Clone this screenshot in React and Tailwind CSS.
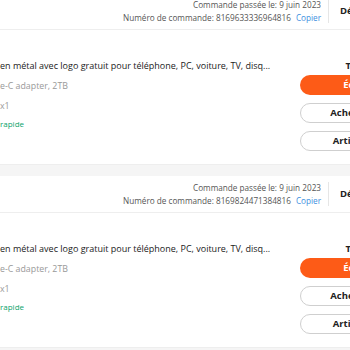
import React from "react";

const orders = [
  { date: "9 juin 2023", number: "8169633336964816" },
  { date: "9 juin 2023", number: "8169824471384816" },
];

const OrderCard = ({ order }) => {
  return (
    <div className="bg-white border-b border-[#eeeeee]">
      {/* header */}
      <div className="flex items-center h-[37px] border-b border-[#eeeeee]">
        <div className="flex-1" />
        <div className="text-right text-[8.2px] leading-[13px] text-[#555]">
          <div>Commande passée le: {order.date}</div>
          <div>
            Numéro de commande: {order.number}
            <span className="ml-[5px] text-[#3d8fe0]">Copier</span>
          </div>
        </div>
        <div className="w-px h-[24px] bg-[#e6e6e6] ml-[7px] mr-[11px]" />
        <div className="w-[120px] pr-[10px] text-[9.5px] font-bold text-[#222] whitespace-nowrap">
          Détails de la commande
        </div>
      </div>

      {/* body */}
      <div className="flex pt-[30px] pb-[13px]">
        <div className="flex-1 min-w-0 pr-[10px]">
          <div className="text-[9px] leading-[12px] text-[#222] whitespace-nowrap">
            en métal avec logo gratuit pour téléphone, PC, voiture, TV, disq...
          </div>
          <div className="mt-[8px] text-[8.8px] leading-[12px] text-[#999]">
            e-C adapter, 2TB
          </div>
          <div className="mt-[8px] text-[8.8px] leading-[12px] text-[#999]">x1</div>
          <div className="mt-[6px] text-[8px] leading-[12px] text-[#0aa36b]">rapide</div>
        </div>
        <div className="w-[150px] flex flex-col items-stretch">
          <div className="text-center text-[9.5px] leading-[12px] font-bold text-[#222]">
            Total: 12,48€
          </div>
          <button className="mt-[3px] h-[20px] rounded-full bg-[#fd5b17] text-white text-[9.5px] font-bold">
            Écrire un avis
          </button>
          <button className="mt-[8px] h-[20px] rounded-full border border-[#cfcfcf] bg-white text-[#222] text-[9.5px] font-bold">
            Acheter à nouveau
          </button>
          <button className="mt-[8px] h-[20px] rounded-full border border-[#cfcfcf] bg-white text-[#222] text-[9.5px] font-bold">
            Articles similaires
          </button>
        </div>
        <div className="w-[10px]" />
      </div>
    </div>
  );
};

export default function App() {
  return (
    <div
      className="w-[350px] h-[350px] overflow-hidden bg-[#f5f5f5]"
      style={{ fontFamily: '"Open Sans", "Noto Sans", sans-serif' }}
    >
      <div className="w-[460px] -mt-[7px] flex flex-col gap-[11px]">
        {orders.map((order) => (
          <OrderCard key={order.number} order={order} />
        ))}
      </div>
    </div>
  );
}
